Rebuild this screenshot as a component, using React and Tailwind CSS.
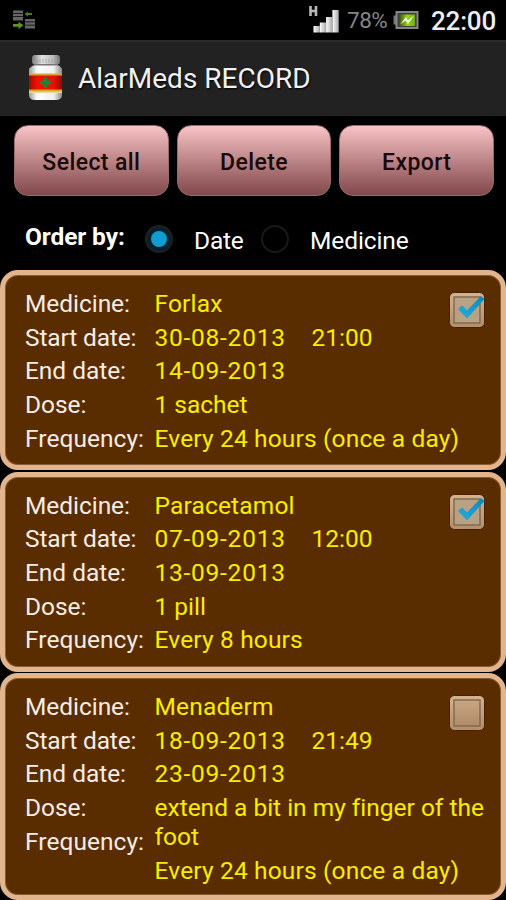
import React from "react";

const records = [
  { name: "Forlax", start: "30-08-2013", time: "21:00", end: "14-09-2013", dose: ["1 sachet"], freq: "Every 24 hours (once a day)", checked: true, box: "h-[200px]" },
  { name: "Paracetamol", start: "07-09-2013", time: "12:00", end: "13-09-2013", dose: ["1 pill"], freq: "Every 8 hours", checked: true, box: "h-[200px]" },
  { name: "Menaderm", start: "18-09-2013", time: "21:49", end: "23-09-2013", dose: ["extend a bit in my finger of the", "foot"], freq: "Every 24 hours (once a day)", checked: false, box: "h-[227px]" },
];

function SyncIcon() {
  return (
    <svg width="24" height="22" viewBox="0 0 24 22">
      <g fill="#666">
        <path d="M1 1.500h10v2.600H1zM1 4.700h10v2.600H1zM1 7.900h10v3.600H1zM13 10h10v2.600H13zM13 13.200h10v2.600H13zM13 16.400h10v3.200H13z" />
      </g>
      <path d="M12.500 5l3.500-2.400v1.300h4v2.200h-4v1.300z" fill="#4f7a24" />
      <path d="M1 15h5.500v-2.300l5 3.600-5 3.600v-2.200H1z" fill="#5d9423" />
    </svg>
  );
}

function SignalIcon() {
  return (
    <svg width="32" height="28" viewBox="0 0 32 28">
      <defs>
        <linearGradient id="bars" x1="0" x2="1"><stop stopColor="#fff" /><stop offset="1" stopColor="#a8a8a8" /></linearGradient>
      </defs>
      <path d="M1.500 0v10M7 0v10M1.500 5h6" stroke="#b8b8b8" strokeWidth="2.600" fill="none" />
      <g fill="url(#bars)">
        <rect x="4.500" y="20" width="6.300" height="6.500" /><rect x="10.800" y="16.500" width="6.300" height="10" />
        <rect x="17.100" y="11" width="6.300" height="15.500" /><rect x="23.400" y="4" width="6.300" height="22.500" />
      </g>
    </svg>
  );
}

function BatteryIcon() {
  return (
    <svg width="26" height="20" viewBox="0 0 26 20">
      <defs>
        <linearGradient id="charge" x1="0" x2="1"><stop stopColor="#42560f" /><stop offset=".5" stopColor="#9bd51c" /><stop offset="1" stopColor="#6fae10" /></linearGradient>
      </defs>
      <rect x="0.500" y="5.500" width="4" height="9" fill="#777" />
      <rect x="3.500" y="2" width="21" height="16" fill="#404040" stroke="#858585" strokeWidth="2" />
      <rect x="6.500" y="4.500" width="15.500" height="11.500" fill="url(#charge)" />
      <path d="M7 14.500l6-7.500 2 3.500L21.500 5 15 14l-2.500-3.500z" fill="#f4ffd7" />
    </svg>
  );
}

function BottleIcon() {
  return (
    <svg width="36" height="48" viewBox="0 0 36 48">
      <defs>
        <linearGradient id="cap" x1="0" x2="1"><stop stopColor="#777" /><stop offset=".35" stopColor="#e2e2e2" /><stop offset=".75" stopColor="#bbb" /><stop offset="1" stopColor="#707070" /></linearGradient>
        <linearGradient id="body" x1="0" x2="1"><stop stopColor="#999" /><stop offset=".25" stopColor="#fff" /><stop offset=".75" stopColor="#eee" /><stop offset="1" stopColor="#8a8a8a" /></linearGradient>
        <linearGradient id="red" x1="0" x2="1"><stop stopColor="#9c0c00" /><stop offset=".25" stopColor="#f21100" /><stop offset=".75" stopColor="#e91000" /><stop offset="1" stopColor="#920900" /></linearGradient>
      </defs>
      <rect x="5" y="2" width="28" height="9.500" rx="3" fill="url(#cap)" />
      <path d="M7 6v4M10 6v4M13 6v4M16 6v4M19 6v4M22 6v4M25 6v4M28 6v4M31 6v4" stroke="#999" strokeWidth=".7" />
      <path d="M7 11h24v2H7z" fill="#777" />
      <path d="M6 12.500h26l3 3V43q-1 4-6 4H8q-5 0-6-4V15.500z" fill="url(#body)" />
      <path d="M2 20.500h33v19.500H2z" fill="#d8a52e" />
      <path d="M2 22.500h33v14H2z" fill="url(#red)" />
      <path d="M2 38.500h33v1.500H2z" fill="#eed994" />
      <path d="M18.500 25.500v8M14.500 29.500h8" stroke="#258034" strokeWidth="3.800" strokeLinecap="round" />
    </svg>
  );
}

function CheckBox({ checked }) {
  return (
    <svg width="38" height="38" viewBox="0 0 38 38">
      <defs>
        <linearGradient id="tan" x1="0" y1="0" x2="0" y2="1"><stop stopColor="#d4b391" /><stop offset="1" stopColor="#b28e6b" /></linearGradient>
        <linearGradient id="well" x1="0" y1="0" x2="0" y2="1"><stop stopColor="#c9a681" /><stop offset="1" stopColor="#b08c69" /></linearGradient>
        <linearGradient id="tick" x1="0" y1="1" x2="1" y2="0"><stop stopColor="#27aede" /><stop offset="1" stopColor="#0788b9" /></linearGradient>
      </defs>
      <rect x="1.500" y="1.500" width="35" height="35" rx="5" fill="url(#tan)" stroke="#4a1e00" />
      <rect x="6" y="6" width="26" height="26" fill={checked ? "#b8a283" : "url(#well)"} stroke="#80674c" strokeWidth="1.400" />
      {checked && <path d="M10 18l4-3.500 5 5L33 5l3.500 3L19 27.500z" fill="url(#tick)" />}
    </svg>
  );
}

function Line({ children, className = "" }) {
  return <div className={"h-[33.7px] leading-[33.7px] whitespace-nowrap " + className}>{children}</div>;
}

function Record({ r }) {
  return (
    <section className={"relative flex shrink-0 rounded-[18px] border-[5px] border-[#e3b58c] bg-[#5a2d00] pl-5 pt-3 text-[24.5px] shadow-[inset_0_0_0_1px_#8a5a30] " + r.box}>
      <div className="w-[129.500px] tracking-[-0.05px] text-[#f5ece6]">
        <Line>Medicine:</Line><Line className="tracking-[-0.15px]">Start date:</Line><Line>End date:</Line><Line>Dose:</Line><Line className="tracking-[0.05px]">Frequency:</Line>
      </div>
      <div className="tracking-[0.16px] text-[#f8ec00]">
        <Line>{r.name}</Line>
        <Line className="flex"><span className="w-[157px] tracking-[0.75px]">{r.start}</span><span className="tracking-normal">{r.time}</span></Line>
        <Line className="tracking-[0.75px]">{r.end}</Line>
        <Line className="tracking-[-0.01px]">{r.dose[0]}</Line>
        {r.dose[1] && <div className="-mt-[2px] h-[31px] leading-[28px] tracking-normal">{r.dose[1]}</div>}
        <Line>{r.freq}</Line>
      </div>
      <div className="absolute right-[15px] top-4"><CheckBox checked={r.checked} /></div>
    </section>
  );
}

export default function App() {
  return (
    <main className="flex h-[900px] w-[506px] flex-col overflow-hidden bg-black font-['Roboto',sans-serif] text-white">
      <header className="flex h-10 shrink-0 items-center pl-3 pr-[10px]">
        <SyncIcon />
        <div className="ml-auto flex items-center">
          <SignalIcon />
          <span className="ml-[6px] mt-[2px] w-[43px] whitespace-nowrap text-[22.5px] tracking-[-0.5px] text-[#858585]">78%</span>
          <span className="ml-[3px]"><BatteryIcon /></span>
          <span className="ml-[12px] mt-[2px] text-[26px] font-medium leading-[38px] tracking-[-0.2px] text-[#eee]">22:00</span>
        </div>
      </header>
      <div className="flex h-[76px] shrink-0 items-center border-t-2 border-[#2b2b2b] bg-[#222] pl-[27px]">
        <span className="mb-[4px]"><BottleIcon /></span>
        <h1 className="ml-[15px] text-[28px] text-[#f1f1f1] [text-shadow:1px_1px_2px_#000]">AlarMeds RECORD</h1>
      </div>
      <div className="grid h-[80px] shrink-0 grid-cols-3 gap-2 pl-[14px] pr-[12px] pt-[9px]">
        {["Select all", "Delete", "Export"].map((label) => (
          <button key={label} className="h-[71px] rounded-[14px] border border-[#9a6b6b] bg-gradient-to-b from-[#f9c4c7] to-[#81494c] pt-[5px] text-[23px] font-medium text-[#190909]"><span className="tracking-[0.4px]">{label}</span></button>
        ))}
      </div>
      <div className="flex h-[74px] shrink-0 items-center pl-[25px] pt-[12px] text-[24.5px]">
        <span className="mb-[4px] w-[120px] whitespace-nowrap font-bold tracking-[-0.1px]">Order by:</span>
        <span className="flex size-[28px] items-center justify-center rounded-full border-2 border-[#182326] bg-[#06212b]"><span className="size-4 rounded-full bg-[#109dcf]" /></span>
        <span className="ml-[21px] mt-[4px] w-[67px] tracking-[-0.2px]">Date</span>
        <span className="size-[28px] rounded-full border-2 border-[#191919]" />
        <span className="ml-[21px] mt-[4px] tracking-[-0.1px]">Medicine</span>
      </div>
      <div className="flex flex-col gap-[1.5px] bg-black">
        {records.map((r) => <Record key={r.name} r={r} />)}
      </div>
    </main>
  );
}
